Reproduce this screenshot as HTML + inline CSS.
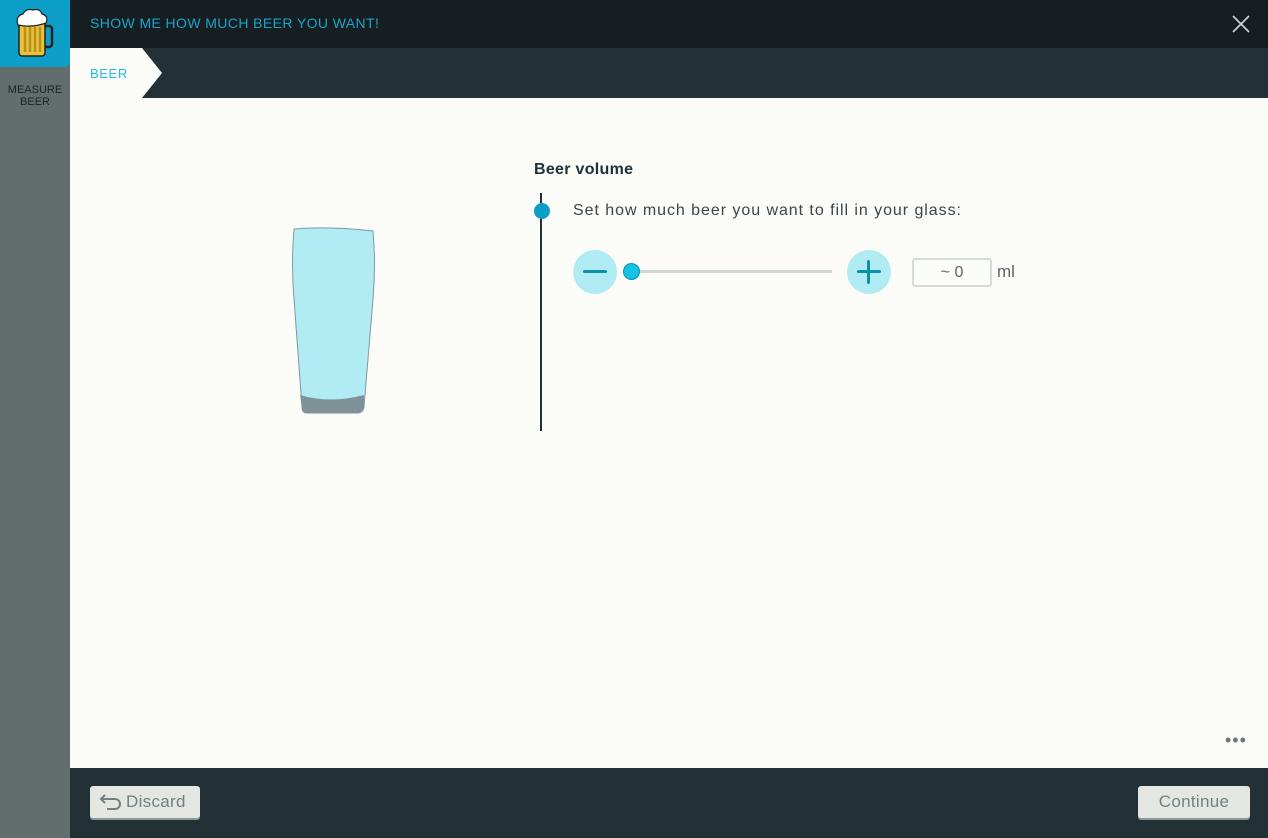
<!DOCTYPE html>
<html><head><meta charset="utf-8"><style>
*{margin:0;padding:0;box-sizing:border-box}
body{width:1268px;height:838px;overflow:hidden;background:#fbfbf8;font-family:"Liberation Sans",sans-serif;position:relative}
.side{position:absolute;left:0;top:0;width:70px;height:838px;background:#626d6d}
.logo{position:absolute;left:0;top:0;width:70px;height:67px;background:#0d9fc7;border-radius:0 0 6px 0}
.slab{position:absolute;left:0;top:84px;width:70px;text-align:center;font-size:11px;line-height:12px;color:#1a2326}
.top{position:absolute;left:70px;top:0;width:1198px;height:48px;background:#171e22}
.top .t{position:absolute;left:20px;top:15px;font-size:14px;letter-spacing:0.4px;color:#1aa3cc}
.tabs{position:absolute;left:70px;top:48px;width:1198px;height:50px;background:#233137}
.foot{position:absolute;left:70px;top:768px;width:1198px;height:70px;background:#233137}
.btn{position:absolute;top:18px;height:32px;background:#e4e6e2;border-radius:3px;box-shadow:0 2px 0 #8a9898;color:#738083;font-size:17px;line-height:31px;letter-spacing:0.3px}
</style></head><body>
<div class="side">
<div class="logo"><svg width="70" height="67" viewBox="0 0 70 67">
<rect x="19" y="20" width="26" height="36" rx="3" fill="#e8c23a" stroke="#222" stroke-width="1.5"/>
<path d="M45 26 h4 a3 3 0 0 1 3 3 v15 a3 3 0 0 1-3 3 h-4" fill="none" stroke="#222" stroke-width="2.5"/>
<path d="M25 27 v25 M30 27 v25 M35 27 v25 M40 27 v25" stroke="#b8901c" stroke-width="2.5"/>
<path d="M18 25 q-3-9 5-11 q3-6 10-4 q7-2 9 4 q7 2 4 9 q-14 5-28 2z" fill="#fff" stroke="#222" stroke-width="1.2"/>
</svg></div>
<div class="slab">MEASURE<br>BEER</div>
</div>
<div class="top"><div class="t">SHOW ME HOW MUCH BEER YOU WANT!</div>
<svg style="position:absolute;left:1162px;top:15px" width="18" height="18"><path d="M1 1L17 17M17 1L1 17" stroke="#cfd6d8" stroke-width="1.6"/></svg></div>
<div class="tabs"><svg width="100" height="50" style="position:absolute;left:0;top:0"><path d="M0 0H72L92 25L72 50H0Z" fill="#fbfbf8"/></svg>
<div style="position:absolute;left:20px;top:18px;font-size:13px;letter-spacing:0.6px;color:#23bde0">BEER</div></div>

<svg style="position:absolute;left:290px;top:224px" width="90" height="195">
<path d="M4 5 Q40 2 83 7 Q86 40 83 75 L74 183 Q73 189 67 189 L17 189 Q12 189 12 183 L4 75 Q1 40 4 5Z" fill="#b1ebf3" stroke="#7f9aa2" stroke-width="1"/>
<path d="M10 171 Q40 180 74 171 L74 183 Q73 189 67 189 L17 189 Q12 189 12 183Z" fill="#7f9297"/>
</svg>

<div style="position:absolute;left:534px;top:161px;font-size:16px;font-weight:bold;letter-spacing:0.3px;color:#233137">Beer volume</div>
<div style="position:absolute;left:540px;top:193px;width:2px;height:238px;background:#233137"></div>
<div style="position:absolute;left:534px;top:203px;width:16px;height:16px;border-radius:50%;background:#0d9fc7"></div>
<div style="position:absolute;left:573px;top:202px;font-size:16px;letter-spacing:0.95px;color:#3a4649">Set how much beer you want to fill in your glass:</div>
<div style="position:absolute;left:573px;top:250px;width:44px;height:44px;border-radius:50%;background:#b1ebf3"></div>
<div style="position:absolute;left:583px;top:270px;width:24px;height:3px;background:#0d8fa8;border-radius:2px"></div>
<div style="position:absolute;left:632px;top:270px;width:200px;height:3px;background:#cfd6d6"></div>
<div style="position:absolute;left:623px;top:263px;width:17px;height:17px;border-radius:50%;background:#14c2e6;border:1px solid #0b8fae"></div>
<div style="position:absolute;left:847px;top:250px;width:44px;height:44px;border-radius:50%;background:#b1ebf3"></div>
<div style="position:absolute;left:857px;top:270px;width:24px;height:3px;background:#0d8fa8;border-radius:2px"></div>
<div style="position:absolute;left:867px;top:260px;width:3px;height:24px;background:#0d8fa8;border-radius:2px"></div>
<div style="position:absolute;left:912px;top:258px;width:80px;height:29px;border:2px solid #d5dbdb;border-radius:3px;text-align:center;font-size:16px;line-height:25px;color:#5a6669">~ 0</div>
<div style="position:absolute;left:997px;top:262px;font-size:17px;color:#5a6669">ml</div>
<div style="position:absolute;left:1225px;top:730px;font-size:18px;color:#6b7779;letter-spacing:1px">•••</div>

<div class="foot">
<div class="btn" style="left:20px;width:110px;padding-left:36px">Discard
<svg style="position:absolute;left:9px;top:7px" width="24" height="18"><path d="M6 2L2 6L6 10M2 6H16A5 5 0 0 1 16 16H8" fill="none" stroke="#738083" stroke-width="2"/></svg></div>
<div class="btn" style="left:1068px;width:112px;text-align:center">Continue</div>
</div>
</body></html>
